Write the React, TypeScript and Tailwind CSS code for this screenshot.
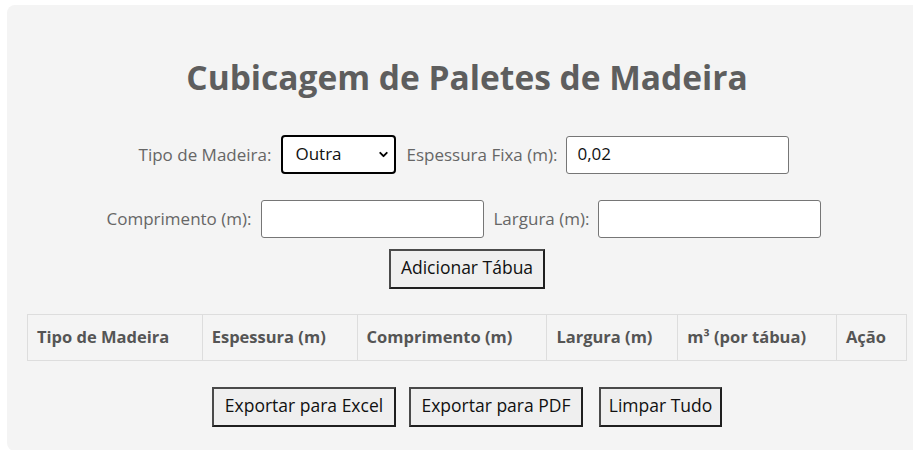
import { ChevronDown } from "lucide-react";

const headers = [
  { label: "Tipo de Madeira", w: "w-[175px]" },
  { label: "Espessura (m)", w: "w-[155px]" },
  { label: "Comprimento (m)", w: "w-[190px]" },
  { label: "Largura (m)", w: "w-[131px]" },
  { label: "m³ (por tábua)", w: "w-[159px]" },
  { label: "Ação", w: "w-[70px]" },
];

function Btn({ children, className = "" }: { children: React.ReactNode; className?: string }) {
  return (
    <button
      className={`h-[40px] whitespace-nowrap bg-[#efefef] px-0 pb-[3px] text-[17.5px] text-[#111] border-2 border-t-[#4a4a4a] border-l-[#4a4a4a] border-r-[#1f1f1f] border-b-[#1f1f1f] ${className}`}
    >
      {children}
    </button>
  );
}

export default function App() {
  return (
    <div
      className="h-[450px] w-[913px] overflow-hidden bg-white pt-[5px] pl-[7px]"
      style={{ fontFamily: '"Open Sans", "Noto Sans", sans-serif' }}
    >
      <div className="w-[920px] rounded-lg bg-[#f4f4f4] px-5 pt-[52px] pb-[24px]">
        <h1 className="text-center text-[33.5px] font-bold leading-[40px] text-[#5e5e5e]">
          Cubicagem de Paletes de Madeira
        </h1>

        <div className="mt-[38px] flex items-center justify-center gap-[9px] pr-[6px] text-[17px] text-[#666]">
          <label className="mr-[1px]">Tipo de Madeira:</label>
          <div className="relative">
            <select className="h-[39px] w-[115px] appearance-none rounded-[4px] border-2 border-black bg-white pl-[12px] pb-[2px] text-[17px] text-[#111] outline-none">
              <option>Outra</option>
            </select>
            <ChevronDown
              className="pointer-events-none absolute right-[6px] top-[13px] text-black"
              size={13}
              strokeWidth={3.5}
            />
          </div>
          <label className="ml-[1px]">Espessura Fixa (m):</label>
          <input
            defaultValue="0,02"
            className="h-[38px] w-[223px] rounded-[3px] border border-[#767676] bg-white px-[10px] pb-[2px] text-[17px] text-[#111] outline-none"
          />
        </div>

        <div className="mt-[26px] flex items-center justify-center gap-[9px] pr-[6px] text-[17px] text-[#666]">
          <label>Comprimento (m):</label>
          <input className="h-[38px] w-[223px] rounded-[3px] border border-[#767676] bg-white outline-none" />
          <label className="ml-[1px]">Largura (m):</label>
          <input className="h-[38px] w-[223px] rounded-[3px] border border-[#767676] bg-white outline-none" />
        </div>

        <div className="mt-[11px] flex justify-center">
          <Btn className="w-[156px]">Adicionar Tábua</Btn>
        </div>

        <table className="mt-[25px] w-[880px] border-collapse">
          <thead>
            <tr>
              {headers.map((h) => (
                <th
                  key={h.label}
                  className={`${h.w} h-[46px] border border-[#dddddd] px-[9px] text-left text-[16.5px] font-bold text-[#555]`}
                >
                  {h.label}
                </th>
              ))}
            </tr>
          </thead>
        </table>

        <div className="mt-[26px] flex justify-center">
          <Btn className="w-[184px]">Exportar para Excel</Btn>
          <Btn className="ml-[13px] w-[174px]">Exportar para PDF</Btn>
          <Btn className="ml-[16px] w-[123px]">Limpar Tudo</Btn>
        </div>
      </div>
    </div>
  );
}
